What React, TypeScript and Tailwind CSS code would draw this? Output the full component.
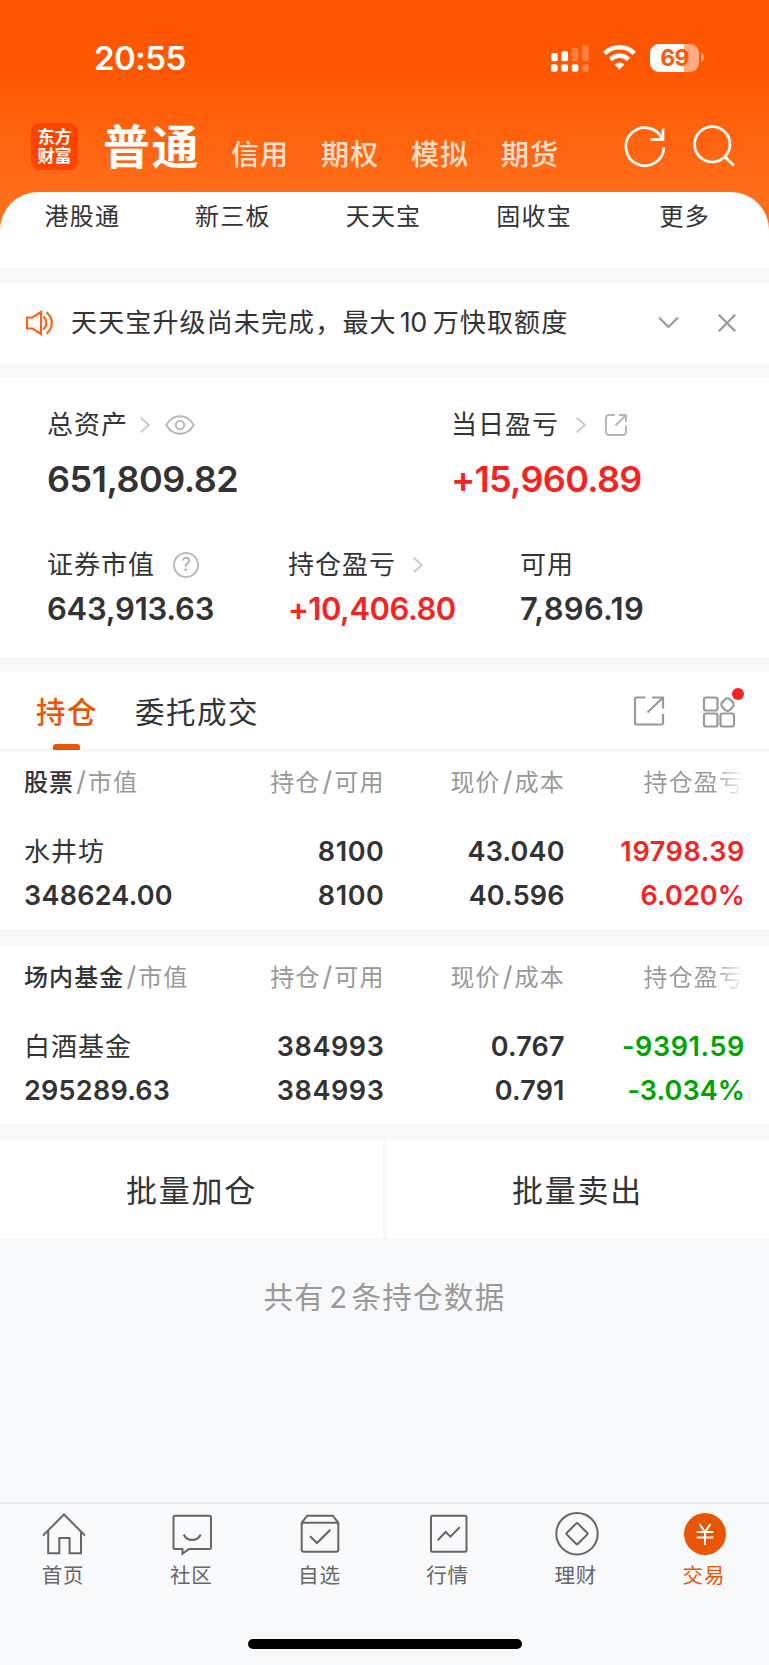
import { useState } from "react";
import type { ReactNode } from "react";

const ACCOUNTS = ["信用", "期权", "模拟", "期货"];
const SHORTCUTS = ["港股通", "新三板", "天天宝", "固收宝", "更多"];

type Holding = {
  group: string;
  name: string;
  marketValue: string;
  held: string;
  available: string;
  price: string;
  cost: string;
  profit: string;
  ratio: string;
  up: boolean;
};

const HOLDINGS: Holding[] = [
  {
    group: "股票",
    name: "水井坊",
    marketValue: "348624.00",
    held: "8100",
    available: "8100",
    price: "43.040",
    cost: "40.596",
    profit: "19798.39",
    ratio: "6.020%",
    up: true,
  },
  {
    group: "场内基金",
    name: "白酒基金",
    marketValue: "295289.63",
    held: "384993",
    available: "384993",
    price: "0.767",
    cost: "0.791",
    profit: "-9391.59",
    ratio: "-3.034%",
    up: false,
  },
];

function StatusBar() {
  return (
    <div className="flex h-[115px] items-center pl-[94px] pr-[65px]">
      <span className="mt-[1px] text-[33px] font-semibold leading-none tracking-[-0.5px] text-white">20:55</span>
      <div className="ml-auto flex items-center">
        <svg className="h-[28px] w-[40px]" viewBox="0 0 40 28" fill="#fff">
          <rect x="1" y="9" width="6.7" height="8.3" rx="2" />
          <rect x="11.3" y="7" width="6.7" height="10.3" rx="2" />
          <rect x="21.7" y="4" width="6.7" height="13.3" rx="2" opacity="0.25" />
          <rect x="32" y="1" width="6.7" height="16.3" rx="2" opacity="0.25" />
          <rect x="1" y="20.3" width="6.7" height="7.4" rx="2" />
          <rect x="11.3" y="20.3" width="6.7" height="7.4" rx="2" />
          <rect x="21.7" y="20.3" width="6.7" height="7.4" rx="2" />
          <rect x="32" y="20.3" width="6.7" height="7.4" rx="2" opacity="0.25" />
        </svg>
        <svg className="ml-[13px] h-[25px] w-[33px]" viewBox="0 0 33 25">
          <path d="M1.8 8.3a21 21 0 0 1 29.4 0" fill="none" stroke="#fff" strokeWidth="4.6" />
          <path d="M7.4 14.4a13 13 0 0 1 18.2 0" fill="none" stroke="#fff" strokeWidth="4.4" />
          <path d="M16.5 24.6l-4.9-5a7 7 0 0 1 9.8 0z" fill="#fff" />
        </svg>
        <div className="ml-[14px] flex h-[28px] w-[49px] items-center justify-center rounded-[9px] bg-[linear-gradient(90deg,#fff_70%,#ffab80_70%)]">
          <span className="mt-[1px] text-[23px] font-bold leading-none tracking-[-0.6px] text-[#ff5a06]">69</span>
        </div>
        <svg className="ml-[2px] h-[9px] w-[3px]" viewBox="0 0 3 9">
          <path d="M0 0c2 .8 3 2.6 3 4.5S2 8.2 0 9z" fill="#ffab80" />
        </svg>
      </div>
    </div>
  );
}

function AccountBar() {
  return (
    <div className="flex h-[77px] items-start pl-[31px] pr-[33px]">
      <div className="mt-[8px] flex h-[47px] w-[47px] flex-col items-center justify-center rounded-[9px] bg-[#ff4400] text-[17px] font-bold leading-[19px] text-white">
        <span>东方</span>
        <span>财富</span>
      </div>
      <span className="ml-[25px] mt-[5px] text-[47px] font-bold leading-[54px] tracking-[1.5px] text-white">普通</span>
      <div className="ml-[31px] mt-[23px] flex gap-[32px]">
        {ACCOUNTS.map((name) => (
          <span key={name} className="text-[28px] font-medium leading-[34px] tracking-[1px] text-[#ffe0cd]">
            {name}
          </span>
        ))}
      </div>
      <svg className="ml-auto mt-[10px] h-[44px] w-[44px]" viewBox="0 0 44 44" fill="none" stroke="#fff" strokeWidth="2.7">
        <path d="M40.9 22.5A19 19 0 1 1 39.5 14.5" />
        <path d="M40 3.5v11H27.5" />
      </svg>
      <svg className="ml-[25px] mt-[10px] h-[44px] w-[44px]" viewBox="0 0 44 44" fill="none" stroke="#fff" strokeWidth="2.7">
        <circle cx="20.3" cy="19.3" r="17.7" />
        <path d="M32.5 31.3l9.2 9.2" />
      </svg>
    </div>
  );
}

function Chevron() {
  return (
    <svg className="h-[16px] w-[10px]" viewBox="0 0 10 16" fill="none" stroke="#c8c8c8" strokeWidth="1.8">
      <path d="M.7.7l8.3 7.3-8.3 7.3" />
    </svg>
  );
}

function Notice() {
  return (
    <div className="mt-[15px] flex h-[79px] items-center bg-white pl-[25px] pr-[33px]">
      <svg className="h-[26px] w-[29px]" viewBox="0 0 29 26" fill="none" stroke="#ff6213" strokeWidth="2.2">
        <path d="M2 7.5h5.5L16 2v22l-8.5-5.5H2z" />
        <path d="M18.3 6.5a8.5 8.5 0 0 1 0 13M21.5 2.3a13.5 13.5 0 0 1 0 21.4" />
      </svg>
      <p className="ml-[17px] mt-[1px] flex text-[26px] leading-[36px] tracking-[1.14px] text-[#333]">
        <span>天天宝升级尚未完成，最大</span>
        <span className="ml-[3px] mr-[6px] text-[27px] tracking-[-0.5px]">10</span>
        <span>万快取额度</span>
      </p>
      <svg className="ml-auto h-[13px] w-[21px]" viewBox="0 0 21 13" fill="none" stroke="#999" strokeWidth="2.2">
        <path d="M1 1.5l9.5 9.5L20 1.5" />
      </svg>
      <svg className="ml-[39px] h-[18px] w-[18px]" viewBox="0 0 18 18" fill="none" stroke="#999" strokeWidth="2.2">
        <path d="M.7.7l16.6 16.6M17.3.7L.7 17.3" />
      </svg>
    </div>
  );
}

function Label({ text, children }: { text: string; children?: ReactNode }) {
  return (
    <div className="flex h-[36px] items-center text-[#333]">
      <span className="text-[26px] leading-[36px] tracking-[1px]">{text}</span>
      {children}
    </div>
  );
}

function Assets() {
  return (
    <section className="mt-[15px] h-[280px] bg-white pl-[47px] pt-[30px] text-[#333]">
      <div className="grid grid-cols-[404px_1fr]">
        <div>
          <Label text="总资产">
            <span className="ml-[12px]">
              <Chevron />
            </span>
            <svg className="ml-[15px] h-[20px] w-[30px]" viewBox="0 0 30 20" fill="none" stroke="#b8b8b8" strokeWidth="2">
              <path d="M1.2 10C4.5 4.3 9 1.2 15 1.2S25.5 4.3 28.8 10C25.5 15.7 21 18.8 15 18.8S4.5 15.7 1.2 10z" />
              <circle cx="15" cy="10" r="4.2" />
            </svg>
          </Label>
          <p className="mt-[16px] text-[36px] font-semibold leading-[40px] tracking-[-0.5px]">651,809.82</p>
        </div>
        <div>
          <Label text="当日盈亏">
            <span className="ml-[17px]">
              <Chevron />
            </span>
            <svg className="ml-[18px] h-[24px] w-[24px]" viewBox="0 0 24 24" fill="none" stroke="#b8b8b8" strokeWidth="2">
              <path d="M11 2H5a3 3 0 0 0-3 3v14a3 3 0 0 0 3 3h14a3 3 0 0 0 3-3v-6.5" />
              <path d="M15 2h7v7M22 2L11.5 12.5" />
            </svg>
          </Label>
          <p className="mt-[16px] text-[36px] font-semibold leading-[40px] tracking-[-0.7px] text-[#f82222]">+15,960.89</p>
        </div>
      </div>
      <div className="mt-[48px] grid grid-cols-[241px_232px_1fr]">
        <div>
          <Label text="证券市值">
            <span className="ml-[18px] flex h-[26px] w-[26px] items-center justify-center rounded-full border-2 border-[#bbb] text-[18px] leading-none text-[#aaa]">
              ?
            </span>
          </Label>
          <p className="mt-[9px] text-[31px] font-semibold leading-[34px] tracking-[-0.25px]">643,913.63</p>
        </div>
        <div>
          <Label text="持仓盈亏">
            <span className="ml-[17px]">
              <Chevron />
            </span>
          </Label>
          <p className="mt-[9px] text-[31px] font-semibold leading-[34px] tracking-[-0.5px] text-[#f82222]">+10,406.80</p>
        </div>
        <div>
          <Label text="可用" />
          <p className="mt-[9px] text-[31px] font-semibold leading-[34px] tracking-[0.3px]">7,896.19</p>
        </div>
      </div>
    </section>
  );
}

function PositionTabs({ tab, onChange }: { tab: number; onChange: (tab: number) => void }) {
  return (
    <div className="mt-[15px] flex h-[79px] items-stretch border-b-2 border-[#f5f6f7] bg-white pl-[36px] pr-[33px]">
      {["持仓", "委托成交"].map((name, i) => (
        <button
          key={name}
          type="button"
          onClick={() => onChange(i)}
          className={`relative mr-[37px] pt-[2px] text-[29.5px] leading-[40px] tracking-[1.5px] ${
            tab === i ? "font-medium text-[#ea5504]" : "text-[#333]"
          }`}
        >
          {name}
          {tab === i && (
            <span className="absolute bottom-[-1px] left-[17px] h-[6px] w-[27px] rounded-t-[3px] rounded-b-[1px] bg-[#ea5504]" />
          )}
        </button>
      ))}
      <svg className="ml-auto mt-[23px] h-[32px] w-[32px]" viewBox="0 0 32 32" fill="none" stroke="#999" strokeWidth="2.2">
        <path d="M12.5 2.5H3.5a1.5 1.5 0 0 0-1.5 1.5v24a1.5 1.5 0 0 0 1.5 1.5h25a1.5 1.5 0 0 0 1.5-1.5v-9" />
        <path d="M19 2.5h11V13.5M30 2.5L14.5 17.5" />
      </svg>
      <div className="relative ml-[37px] mt-[23px] h-[34px] w-[34px]">
        <svg className="h-[34px] w-[34px]" viewBox="0 0 34 34" fill="none" stroke="#999" strokeWidth="2.2">
          <rect x="2" y="2.5" width="13.5" height="13" rx="2" />
          <rect x="2" y="18.5" width="13.5" height="13" rx="2" />
          <rect x="18.5" y="18.5" width="13.5" height="13" rx="2" />
          <rect x="20.1" y="4.2" width="10.8" height="10.8" rx="3.5" transform="rotate(45 25.5 9.6)" />
        </svg>
        <span className="absolute right-[-8px] top-[-7px] h-[12px] w-[12px] rounded-full bg-[#f82222]" />
      </div>
    </div>
  );
}

function Pair({ first, second, className }: { first: ReactNode; second: ReactNode; className: string }) {
  return (
    <div className={`text-[27px] font-semibold leading-[44px] ${className}`}>
      <p>{first}</p>
      <p>{second}</p>
    </div>
  );
}

function Slash() {
  return <span className="ml-[2px] mr-[1px] text-[27px] leading-none">/</span>;
}

function HoldingTable({ item }: { item: Holding }) {
  return (
    <section className="bg-white px-[24px] pt-[14px] text-[#333]">
      <div className="grid h-[36px] grid-cols-4 text-right text-[24px] leading-[36px] tracking-[1.1px] text-[#999]">
        <span className="whitespace-nowrap text-left">
          <span className="font-medium text-[#333]">{item.group}</span>
          <Slash />
          市值
        </span>
        <span>
          持仓
          <Slash />
          可用
        </span>
        <span>
          现价
          <Slash />
          成本
        </span>
        <span className="ml-auto mr-[1px] bg-[linear-gradient(90deg,#999_70%,#fff_100%)] bg-clip-text text-transparent">
          持仓盈亏
        </span>
      </div>
      <div className="mt-[29px] grid h-[99px] grid-cols-4 text-right">
        <div className="text-left leading-[44px]">
          <p className="text-[26px] tracking-[1px]">{item.name}</p>
          <p className="text-[27px] font-semibold tracking-[0.25px]">{item.marketValue}</p>
        </div>
        <Pair first={item.held} second={item.available} className="tracking-[0.6px] text-[#333]" />
        <Pair first={item.price} second={item.cost} className="tracking-[0.2px] text-[#333]" />
        <Pair
          first={<span className="tracking-[0.6px]">{item.profit}</span>}
          second={<span className="tracking-[0.1px]">{item.ratio}</span>}
          className={item.up ? "text-[#f82222]" : "text-[#00a400]"}
        />
      </div>
    </section>
  );
}

const NAV: { name: string; icon: ReactNode }[] = [
  {
    name: "首页",
    icon: <path d="M3 25.5l21-21 21 21M8.2 21v22.3h11.1V28h10.3v15.3H41V21" />,
  },
  {
    name: "社区",
    icon: (
      <>
        <path d="M7 5.7h34.5a1.5 1.5 0 0 1 1.5 1.5v30.3a1.5 1.5 0 0 1-1.5 1.5H21l-6.500 4.800V39H7a1.5 1.5 0 0 1-1.5-1.5V7.2A1.5 1.5 0 0 1 7 5.7z" />
        <path d="M15.7 24.5c3.5 7.3 13.5 7.3 17 0" />
      </>
    ),
  },
  {
    name: "自选",
    icon: (
      <>
        <path d="M5.7 12.7l5.6-7h25.4l5.6 7v27a2 2 0 0 1-2 2H7.7a2 2 0 0 1-2-2zM5.7 12.7h36.6" />
        <path d="M14 26.3l7 6.7 13.3-13.3" />
      </>
    ),
  },
  {
    name: "行情",
    icon: (
      <>
        <rect x="6" y="5.7" width="35.5" height="36" rx="1.5" />
        <path d="M12.7 30.3l8-8.3 4.7 4.7 9.3-9.4" />
      </>
    ),
  },
  {
    name: "理财",
    icon: (
      <>
        <circle cx="24" cy="23.7" r="20.7" />
        <rect x="16.2" y="15.9" width="15.6" height="15.6" rx="1" transform="rotate(45 24 23.7)" />
      </>
    ),
  },
  {
    name: "交易",
    icon: (
      <>
        <circle cx="24" cy="24" r="21" fill="#ea5504" stroke="none" />
        <path d="M18.5 14l5.5 8 5.5-8M15.7 22h16.6M15.7 27.5h16.6M24 22v13" stroke="#fff" />
      </>
    ),
  },
];

function BottomNav() {
  return (
    <nav className="mt-auto flex h-[163px] flex-col items-center border-t-2 border-[#ebecee] bg-[#f8f9fb]">
      <div className="grid w-full grid-cols-6 pt-[6px]">
        {NAV.map(({ name, icon }) => (
          <div
            key={name}
            className={`flex flex-col items-center ${name === "交易" ? "text-[#ea5504]" : "text-[#666]"}`}
          >
            <svg className="h-[48px] w-[48px]" viewBox="0 0 48 48" fill="none" stroke="currentColor" strokeWidth="2">
              {icon}
            </svg>
            <span className="mt-[3px] pr-[2px] text-[20.5px] leading-[30px] tracking-[0.8px]">{name}</span>
          </div>
        ))}
      </div>
      <div className="mb-[16px] mt-auto h-[10px] w-[274px] rounded-full bg-black" />
    </nav>
  );
}

export default function App() {
  const [tab, setTab] = useState(0);

  return (
    <div className="flex h-[1665px] w-[769px] flex-col overflow-hidden bg-[#f7f8fa] font-['Inter','Noto_Sans_CJK_SC',sans-serif]">
      <header className="h-[268px] bg-[linear-gradient(180deg,#ff5600_70px,#ff6e1a_195px)]">
        <StatusBar />
        <AccountBar />
        <div className="grid h-[76px] grid-cols-5 rounded-t-[38px] bg-white pl-[7px] pr-[9px] pt-[7px] text-center text-[24px] leading-[36px] tracking-[1.2px] text-[#333]">
          {SHORTCUTS.map((name) => (
            <span key={name}>{name}</span>
          ))}
        </div>
      </header>

      <Notice />
      <Assets />
      <PositionTabs tab={tab} onChange={setTab} />
      <HoldingTable item={HOLDINGS[0]} />
      <div className="h-[17px]" />
      <HoldingTable item={HOLDINGS[1]} />

      <div className="mt-[17px] grid h-[98px] grid-cols-2 gap-[3px] text-[31px] tracking-[1.7px] text-[#333]">
        <button type="button" className="bg-white pt-[3px]">
          批量加仓
        </button>
        <button type="button" className="bg-white pt-[3px]">
          批量卖出
        </button>
      </div>
      <p className="mt-[37px] text-center text-[29.5px] leading-[42px] tracking-[1.3px] text-[#999]">
        共有<span className="ml-[4px] mr-[3px]">2</span>条持仓数据
      </p>

      <BottomNav />
    </div>
  );
}
